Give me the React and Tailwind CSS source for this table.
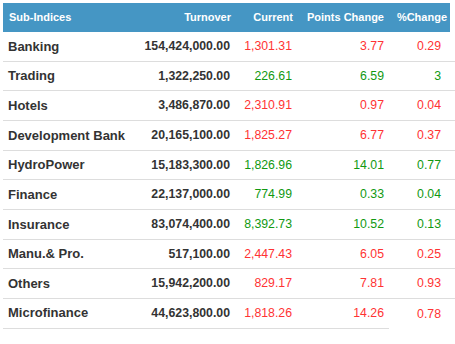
const rows = [
  { name: "Banking", turnover: "154,424,000.00", current: "1,301.31", points: "3.77", pct: "0.29", up: false },
  { name: "Trading", turnover: "1,322,250.00", current: "226.61", points: "6.59", pct: "3", up: true },
  { name: "Hotels", turnover: "3,486,870.00", current: "2,310.91", points: "0.97", pct: "0.04", up: false },
  { name: "Development Bank", turnover: "20,165,100.00", current: "1,825.27", points: "6.77", pct: "0.37", up: false },
  { name: "HydroPower", turnover: "15,183,300.00", current: "1,826.96", points: "14.01", pct: "0.77", up: true },
  { name: "Finance", turnover: "22,137,000.00", current: "774.99", points: "0.33", pct: "0.04", up: true },
  { name: "Insurance", turnover: "83,074,400.00", current: "8,392.73", points: "10.52", pct: "0.13", up: true },
  { name: "Manu.& Pro.", turnover: "517,100.00", current: "2,447.43", points: "6.05", pct: "0.25", up: false },
  { name: "Others", turnover: "15,942,200.00", current: "829.17", points: "7.81", pct: "0.93", up: false },
  { name: "Microfinance", turnover: "44,623,800.00", current: "1,818.26", points: "14.26", pct: "0.78", up: false },
];

const cols = "grid grid-cols-[137px_96px_62px_91px_66px]";

const App = () => {
  return (
    <div
      className="w-[455px] h-[344px] bg-white overflow-hidden pt-[3px] pl-[3px]"
      style={{ fontFamily: '"Liberation Sans", Arial, sans-serif' }}
    >
      <div className="grid grid-cols-[137px_96px_62px_91px_61px] h-[29px] items-center bg-[#4596c4] text-white text-[11px] font-bold w-[447px]">
        <div className="pl-[6px]">Sub-Indices</div>
        <div className="text-right pr-[5px]">Turnover</div>
        <div className="text-right pr-[5px]">Current</div>
        <div className="text-right pr-[5px]">Points Change</div>
        <div className="text-right pr-[3px] whitespace-nowrap">%Change</div>
      </div>
      {rows.map((row, i) => {
        let color = row.up ? "text-[#119911]" : "text-[#ff3333]";
        let last = i === rows.length - 1;
        return (
          <div key={i} className={`${cols} h-[29.67px]`}>
            <div className="flex items-center pl-[5px] border-b border-[#dddddd] text-[13px] font-bold text-[#333333]">
              {row.name}
            </div>
            <div className="flex items-center justify-end pr-[6px] border-b border-[#dddddd] text-[12.3px] font-bold text-[#333333]">
              {row.turnover}
            </div>
            <div className={`flex items-center justify-end pr-[6px] border-b border-[#dddddd] text-[12.3px] ${color}`}>
              {row.current}
            </div>
            <div className={`flex items-center justify-end pr-[5px] border-b border-[#dddddd] text-[12.3px] ${color}`}>
              {row.points}
            </div>
            <div className={`flex items-center justify-end pr-[14px] text-[12.3px] ${color} ${last ? "" : "border-b border-[#dddddd]"}`}>
              {row.pct}
            </div>
          </div>
        );
      })}
    </div>
  );
};

export default App;
